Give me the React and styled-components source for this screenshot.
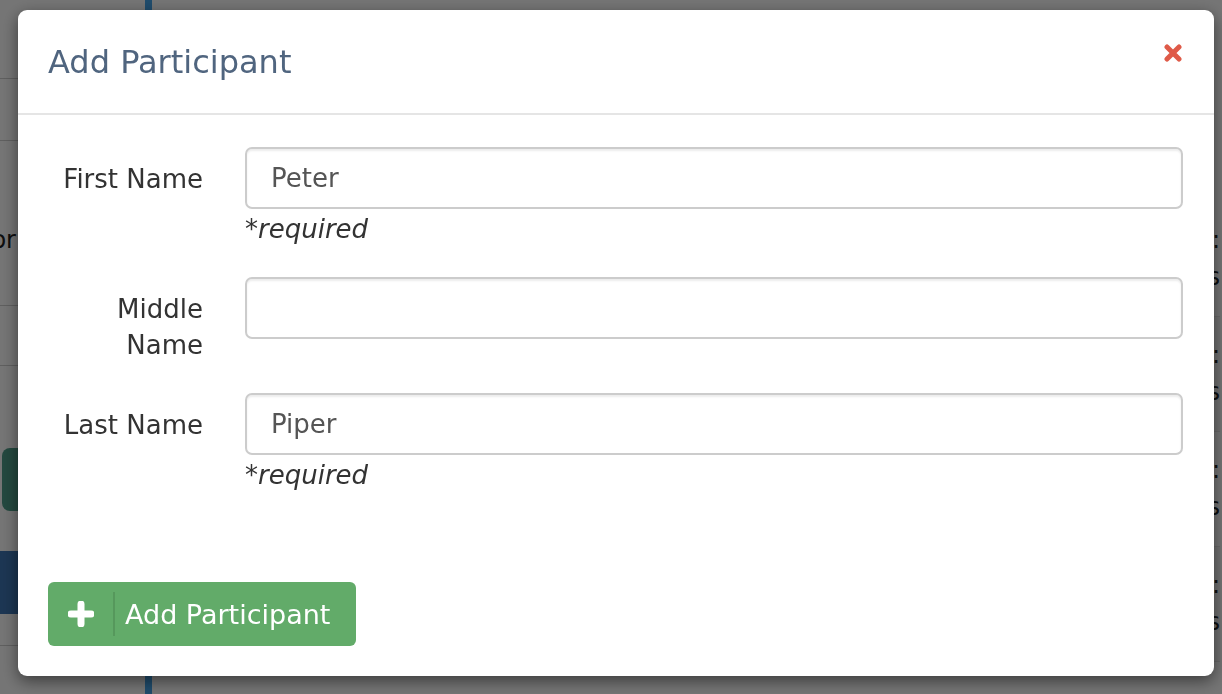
import React from 'react';
import styled, { createGlobalStyle } from 'styled-components';

const GlobalStyle = createGlobalStyle`
  html, body {
    margin: 0;
    padding: 0;
    overflow: hidden;
  }
  body {
    font-family: "DejaVu Sans", "Liberation Sans", sans-serif;
    background: #ffffff;
  }
`;

const Page = styled.div`
  display: flex;
  width: 1222px;
  height: 694px;
  overflow: hidden;
  background: #ffffff;
`;

const Sidebar = styled.div`
  width: 145px;
  flex-shrink: 0;
  border-right: 7px solid #46a6ec;
  display: flex;
  flex-direction: column;
  background: #ffffff;
  overflow: hidden;
`;

const NavItem = styled.div`
  height: ${(props) => props.h}px;
  padding-top: ${(props) => props.pt || 0}px;
  border-bottom: 1px solid #cfcfcf;
  display: flex;
  align-items: center;
  justify-content: flex-end;
  box-sizing: border-box;
`;

const NavLabel = styled.span`
  font-size: 24px;
  color: #222;
  white-space: nowrap;
  padding-right: 129px;
`;

const NavSpacer = styled.div`
  height: ${(props) => props.h}px;
  display: flex;
  align-items: center;
`;

const NavButton = styled.div`
  margin-left: 2px;
  width: 130px;
  height: 63px;
  border-radius: 8px;
  background: ${(props) => props.bg};
`;

const NavBlock = styled.div`
  height: 63px;
  background: #3e76b5;
`;

const Content = styled.div`
  flex: 1;
  display: flex;
  flex-direction: column;
  padding: 202px 2px 0 40px;
  background: #ffffff;
`;

const TableRow = styled.div`
  height: 114px;
  flex-shrink: 0;
  display: flex;
  justify-content: flex-end;
  align-items: center;
  border-bottom: 1px solid #e4e4e4;
  background: ${(props) => (props.striped ? '#f4f4f4' : '#ffffff')};
`;

const AgeCell = styled.div`
  font-size: 24px;
  color: #222;
  line-height: 37px;
  text-align: right;
  white-space: nowrap;
`;

const Backdrop = styled.div`
  position: fixed;
  inset: 0;
  background: rgba(0, 0, 0, 0.54);
`;

const Modal = styled.div`
  position: fixed;
  top: 10px;
  left: 18px;
  width: 1196px;
  height: 666px;
  box-sizing: border-box;
  background: #ffffff;
  border-radius: 9px;
  box-shadow: 0 5px 16px rgba(0, 0, 0, 0.5);
  display: flex;
  flex-direction: column;
`;

const Header = styled.div`
  height: 105px;
  flex-shrink: 0;
  box-sizing: border-box;
  display: flex;
  justify-content: space-between;
  padding: 0 32px 0 30px;
  border-bottom: 2px solid #e5e5e5;
`;

const Title = styled.h4`
  margin: 0;
  align-self: center;
  font-size: 32px;
  font-weight: 400;
  color: #50657f;
`;

const CloseButton = styled.button`
  margin-top: 34px;
  align-self: flex-start;
  width: 18px;
  height: 18px;
  padding: 0;
  border: none;
  background: transparent;
  display: flex;
  cursor: pointer;
`;

const Body = styled.div`
  flex: 1;
  display: flex;
  flex-direction: column;
  padding: 32px 31px 30px 30px;
`;

const Form = styled.div`
  display: flex;
  flex-direction: column;
  gap: 30px;
`;

const Row = styled.div`
  display: grid;
  grid-template-columns: 155px 1fr;
  column-gap: 42px;
`;

const Label = styled.label`
  padding-top: 14px;
  font-size: 26px;
  line-height: 36px;
  color: #333;
  text-align: right;
`;

const Field = styled.div`
  display: flex;
  flex-direction: column;
`;

const Input = styled.input`
  height: 62px;
  box-sizing: border-box;
  width: 100%;
  border: 2px solid #cccccc;
  border-radius: 7px;
  padding: 0 24px;
  font-family: "DejaVu Sans", "Liberation Sans", sans-serif;
  font-size: 26px;
  color: #555;
  box-shadow: inset 0 2px 2px rgba(0, 0, 0, 0.075);
  outline: none;
`;

const Help = styled.div`
  margin-top: 2px;
  font-size: 26px;
  line-height: 36px;
  font-style: italic;
  color: #333;
`;

const Footer = styled.div`
  margin-top: auto;
  display: flex;
`;

const AddButton = styled.button`
  width: 308px;
  height: 64px;
  border: none;
  border-radius: 6px;
  background: #62ab69;
  color: #ffffff;
  display: flex;
  align-items: center;
  padding: 0 0 0 20px;
  font-family: "DejaVu Sans", "Liberation Sans", sans-serif;
  font-size: 27px;
  white-space: nowrap;
  cursor: pointer;
`;

const Divider = styled.span`
  width: 2px;
  height: 44px;
  flex-shrink: 0;
  margin: 0 10px 0 19px;
  background: #56985c;
`;

const PlusIcon = () => (
  <svg width="26" height="26" viewBox="0 0 26 26">
    <path d="M13 3 V23 M3 13 H23" stroke="#ffffff" strokeWidth="7" strokeLinecap="round" />
  </svg>
);

const TimesIcon = () => (
  <svg width="18" height="18" viewBox="0 0 18 18">
    <path d="M3 3 L15 15 M15 3 L3 15" stroke="#df5a48" strokeWidth="5" strokeLinecap="round" />
  </svg>
);

function FormRow({ label, value, required }) {
  return (
    <Row>
      <Label>{label}</Label>
      <Field>
        <Input defaultValue={value} />
        {required && <Help>*required</Help>}
      </Field>
    </Row>
  );
}

const ages = ['9 years', '7 years', '5 years', '4 years'];

export default function App() {
  return (
    <>
      <GlobalStyle />
      <Page>
        <Sidebar>
          <NavItem h={79} />
          <NavItem h={62} />
          <NavItem h={165} pt={34}>
            <NavLabel>Mentor</NavLabel>
          </NavItem>
          <NavItem h={60} />
          <NavSpacer h={82} />
          <NavSpacer h={63}>
            <NavButton bg="#4f9e8a" />
          </NavSpacer>
          <NavSpacer h={40} />
          <NavBlock />
          <NavItem h={32} />
        </Sidebar>
        <Content>
          {ages.map((age, i) => (
            <TableRow key={age} striped={i % 2 === 1}>
              <AgeCell>
                Age:
                <br />
                {age}
              </AgeCell>
            </TableRow>
          ))}
        </Content>
      </Page>
      <Backdrop />
      <Modal>
        <Header>
          <Title>Add Participant</Title>
          <CloseButton aria-label="Close">
            <TimesIcon />
          </CloseButton>
        </Header>
        <Body>
          <Form>
            <FormRow label="First Name" value="Peter" required />
            <FormRow label="Middle Name" value="" />
            <FormRow label="Last Name" value="Piper" required />
          </Form>
          <Footer>
            <AddButton>
              <PlusIcon />
              <Divider />
              Add Participant
            </AddButton>
          </Footer>
        </Body>
      </Modal>
    </>
  );
}
